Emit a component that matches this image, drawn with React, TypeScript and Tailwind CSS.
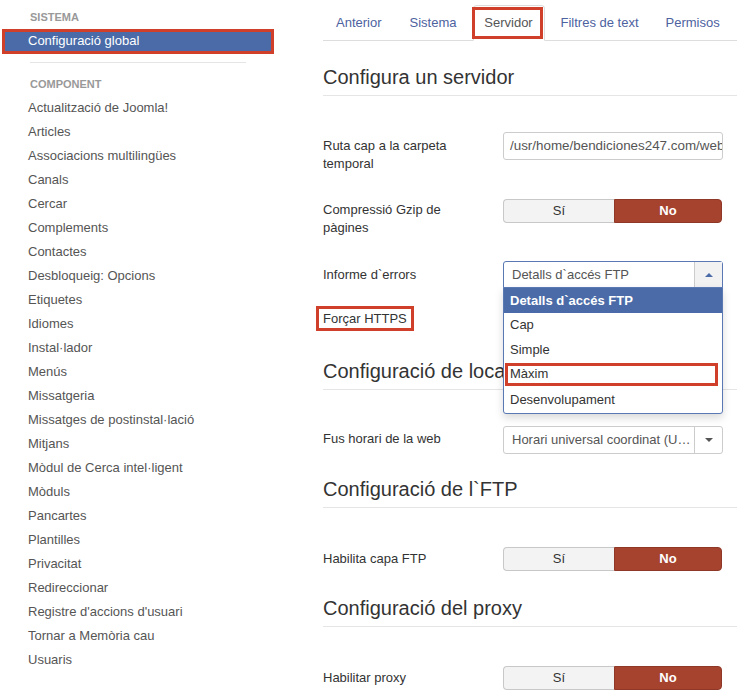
import React from "react";

const items = [
  "Actualització de Joomla!",
  "Articles",
  "Associacions multilingües",
  "Canals",
  "Cercar",
  "Complements",
  "Contactes",
  "Desbloqueig: Opcions",
  "Etiquetes",
  "Idiomes",
  "Instal·lador",
  "Menús",
  "Missatgeria",
  "Missatges de postinstal·lació",
  "Mitjans",
  "Mòdul de Cerca intel·ligent",
  "Mòduls",
  "Pancartes",
  "Plantilles",
  "Privacitat",
  "Redireccionar",
  "Registre d'accions d'usuari",
  "Tornar a Memòria cau",
  "Usuaris",
];

function Toggle() {
  return (
    <div className="flex w-[219px] h-[24px] text-[13px] leading-[22px]">
      <div className="w-[111px] bg-[#f3f3f3] border border-[#c8c8c8] border-r-0 rounded-l-[4px] text-center text-[#333]">
        Sí
      </div>
      <div className="flex-1 bg-[#a6432f] border border-[#8f3827] rounded-r-[4px] text-center text-white font-bold">
        No
      </div>
    </div>
  );
}

function Heading({ children, pt }: { children: React.ReactNode; pt: string }) {
  return (
    <div className={`${pt} pb-[4px] border-b border-[#e5e5e5] text-[20px] leading-[28px] text-[#333] whitespace-nowrap`}>
      {children}
    </div>
  );
}

export default function App() {
  return (
    <div
      className="w-[737px] h-[696px] bg-white overflow-hidden flex"
      style={{ fontFamily: '"Liberation Sans", Arial, sans-serif' }}
    >
      {/* Sidebar */}
      <div className="w-[323px] shrink-0 pt-[11px]">
        <div className="pl-[30px] text-[11px] font-bold text-[#999] leading-[13px] uppercase">Sistema</div>
        <div className="mt-[5px] ml-[2px] w-[272px] h-[25px] bg-[#4a6ba7] border-[3px] border-[#cf3f29] pl-[23px] text-white text-[13px] leading-[18px]">
          Configuració global
        </div>
        <div className="mt-[8px] ml-[30px] w-[216px] border-t border-[#e5e5e5]"></div>
        <div className="mt-[15px] pl-[30px] text-[11px] font-bold text-[#999] leading-[13px] uppercase">Component</div>
        <div className="mt-[5px] pl-[28px]">
          {items.map((t) => (
            <div key={t} className="h-[24px] leading-[24px] text-[13px] text-[#555] whitespace-nowrap">
              {t}
            </div>
          ))}
        </div>
      </div>

      {/* Main */}
      <div className="flex-1 text-[13px] text-[#333] min-w-0">
        {/* Tabs */}
        <div className="h-[41px] border-b border-[#ddd] flex items-end pl-[2px] text-[#4d62a0]">
          <div className="h-[35px] px-[11px] leading-[36px] mr-[6px]">Anterior</div>
          <div className="h-[35px] px-[11px] leading-[36px] mr-[5px]">Sistema</div>
          <div className="relative h-[36px] w-[72px] mb-[-1px] bg-white border border-[#ddd] border-b-white rounded-t-[4px] leading-[34px] text-center text-[#555] mr-[5px]">
            Servidor
            <div className="absolute left-[-2px] top-[1px] w-[71px] h-[32px] border-[3px] border-[#cf3f29]"></div>
          </div>
          <div className="h-[35px] px-[11px] leading-[36px] mr-[5px]">Filtres de text</div>
          <div className="h-[35px] px-[11px] leading-[36px]">Permisos</div>
        </div>

        <Heading pt="pt-[22px]">Configura un servidor</Heading>

        {/* Ruta */}
        <div className="mt-[36px] flex">
          <div className="w-[180px] pt-[5px] leading-[18px]">
            Ruta cap a la carpeta
            <br />
            temporal
          </div>
          <div className="w-[220px] h-[28px] border border-[#ccc] rounded-[3px] pl-[6px] leading-[26px] overflow-hidden whitespace-nowrap text-[#555] text-[13.4px]">
            /usr/home/bendiciones247.com/web
          </div>
        </div>

        {/* Gzip */}
        <div className="mt-[26px] flex">
          <div className="w-[180px] pt-[2px] leading-[18px]">
            Compressió Gzip de
            <br />
            pàgines
          </div>
          <Toggle />
        </div>

        {/* Informe d'errors */}
        <div className="mt-[24px] flex relative">
          <div className="w-[180px] pt-[5px] leading-[18px]">Informe d`errors</div>
          <div className="relative w-[220px] h-[28px] border border-[#5a78b4] rounded-t-[3px] flex">
            <div className="flex-1 pl-[8px] leading-[26px] text-[#555]">Detalls d`accés FTP</div>
            <div className="w-[28px] h-full bg-[#f2f2f2] border-l border-[#ccc] flex items-center justify-center">
              <svg width="8" height="4" viewBox="0 0 8 4">
                <path d="M0 4 L4 0 L8 4 Z" fill="#4a6ba7" />
              </svg>
            </div>
            {/* Dropdown */}
            <div className="absolute left-[-1px] top-[25px] w-[220px] bg-white border border-[#5a78b4] rounded-b-[3px] shadow-[0_4px_8px_rgba(0,0,0,0.15)] z-10">
              <div className="h-[25px] leading-[25px] pl-[6px] bg-[#4a6ba7] text-white font-bold">Detalls d`accés FTP</div>
              <div className="h-[25px] leading-[24px] pl-[6px] text-[#333]">Cap</div>
              <div className="h-[25px] leading-[24px] pl-[6px] text-[#333]">Simple</div>
              <div className="relative h-[25px] leading-[22px] pl-[6px] text-[#333]">
                Màxim
                <div className="absolute left-[1px] top-0 w-[213px] h-[23px] border-[3px] border-[#cf3f29]"></div>
              </div>
              <div className="h-[25px] leading-[24px] pl-[6px] text-[#333]">Desenvolupament</div>
            </div>
          </div>
        </div>

        {/* Forçar HTTPS */}
        <div className="mt-[17px] flex">
          <div className="relative leading-[18px] pt-[4px]">
            Forçar HTTPS
            <div className="absolute left-[-7px] top-[0px] w-[98px] h-[25px] border-[3px] border-[#cf3f29]"></div>
          </div>
        </div>

        <Heading pt="pt-[29px]">Configuració de localització</Heading>

        {/* Fus horari */}
        <div className="mt-[36px] flex">
          <div className="w-[180px] pt-[4px] leading-[18px]">Fus horari de la web</div>
          <div className="w-[220px] h-[28px] border border-[#ccc] rounded-[3px] flex">
            <div className="flex-1 pl-[8px] leading-[26px] text-[#555] whitespace-nowrap overflow-hidden">
              Horari universal coordinat (U…
            </div>
            <div className="w-[28px] h-full border-l border-[#ccc] flex items-center justify-center">
              <svg width="8" height="4" viewBox="0 0 8 4">
                <path d="M0 0 L8 0 L4 4 Z" fill="#555" />
              </svg>
            </div>
          </div>
        </div>

        <Heading pt="pt-[21px]">Configuració de l`FTP</Heading>

        <div className="mt-[39px] flex items-center">
          <div className="w-[180px] leading-[18px]">Habilita capa FTP</div>
          <Toggle />
        </div>

        <Heading pt="pt-[23px]">Configuració del proxy</Heading>

        <div className="mt-[39px] flex items-center">
          <div className="w-[180px] leading-[18px]">Habilitar proxy</div>
          <Toggle />
        </div>
      </div>
    </div>
  );
}
